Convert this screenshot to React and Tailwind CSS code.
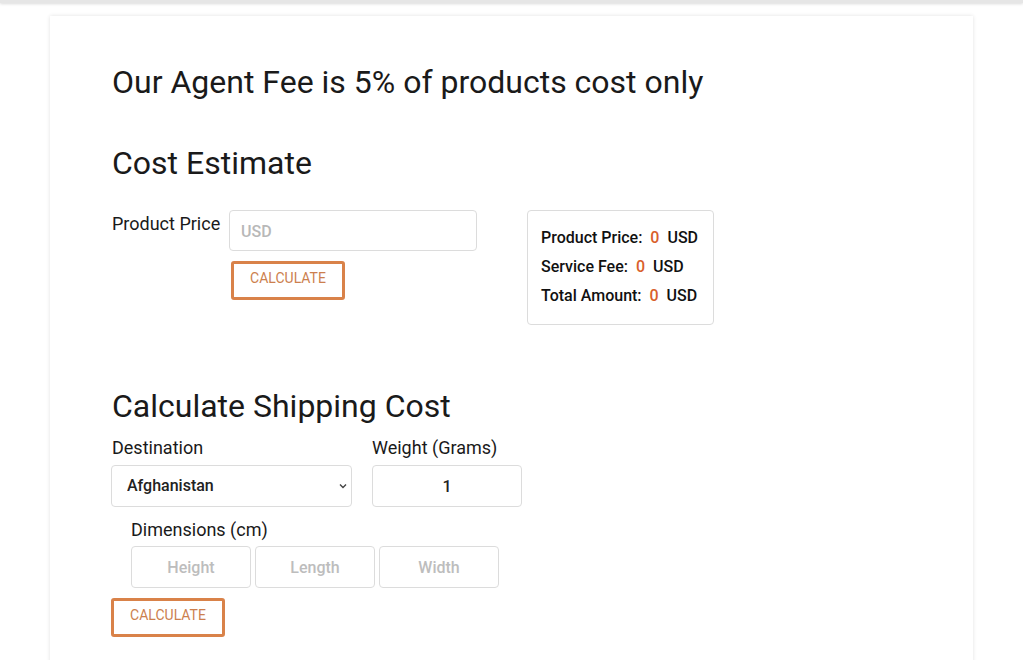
export default function App() {
  const font = { fontFamily: 'Roboto, "Liberation Sans", sans-serif' };
  return (
    <div className="w-[1023px] h-[660px] overflow-hidden bg-white relative" style={font}>
      <div className="h-[3px] bg-[#e6e6e6] shadow-[0_1px_3px_rgba(0,0,0,0.15)]"></div>
      <div className="mx-[50px] mt-[13px] h-[700px] bg-white shadow-[0_0_4px_rgba(0,0,0,0.12)] pl-[62px] pt-[48px] text-[#1a1a1a]">
        <h1 className="text-[32px] leading-[36px] font-normal">Our Agent Fee is 5% of products cost only</h1>
        <h2 className="text-[32px] leading-[36px] font-normal mt-[45px]">Cost Estimate</h2>
        <div className="flex mt-[29px]">
          <div className="text-[18px] leading-[24px] pt-[2px] w-[117px]">Product Price</div>
          <div className="flex flex-col w-[248px]">
            <input
              placeholder="USD"
              className="h-[41px] w-[248px] border border-[#dcdcdc] rounded-[4px] px-[11px] pt-[2px] text-[16px] font-medium placeholder:text-[#b8b8b8] outline-none"
            />
            <button className="mt-[10px] ml-[2px] w-[114px] h-[39px] pb-[4px] border-[3px] border-[#d98249] rounded-[3px] text-[#cc7f4e] text-[14px] bg-white">
              CALCULATE
            </button>
          </div>
          <div className="ml-[50px] w-[187px] h-[115px] border border-[#dcdcdc] rounded-[4px] px-[13px] pt-[12px] text-[16px] font-medium text-[#111]">
            <div className="leading-[29px]">Product Price:&nbsp; <span className="text-[#d9602c]">0</span>&nbsp; USD</div>
            <div className="leading-[29px]">Service Fee:&nbsp; <span className="text-[#d9602c]">0</span>&nbsp; USD</div>
            <div className="leading-[29px]">Total Amount:&nbsp; <span className="text-[#d9602c]">0</span>&nbsp; USD</div>
          </div>
        </div>
        <h2 className="text-[32px] leading-[36px] font-normal mt-[63px]">Calculate Shipping Cost</h2>
        <div className="flex mt-[12px] gap-[20px]">
          <div className="flex flex-col w-[241px]">
            <div className="text-[18px] leading-[24px]">Destination</div>
            <div className="relative mt-[5px] -ml-[1px]">
              <select className="appearance-none h-[42px] w-[241px] border border-[#dcdcdc] rounded-[4px] pl-[15px] text-[16px] font-medium text-[#222] bg-white outline-none">
                <option>Afghanistan</option>
              </select>
              <svg className="absolute right-[5px] top-[17px]" width="10" height="8" viewBox="0 0 10 8">
                <path d="M2 2.5 L5 5.5 L8 2.5" stroke="#444" strokeWidth="1.4" fill="none" />
              </svg>
            </div>
          </div>
          <div className="flex flex-col w-[150px] -ml-[1px]">
            <div className="text-[18px] leading-[24px]">Weight (Grams)</div>
            <input
              defaultValue="1"
              className="mt-[5px] h-[42px] w-[150px] border border-[#dcdcdc] rounded-[4px] text-center text-[16px] font-medium text-[#222] outline-none"
            />
          </div>
        </div>
        <div className="ml-[19px] mt-[11px] text-[18px] leading-[24px]">Dimensions (cm)</div>
        <div className="ml-[19px] mt-[4px] flex gap-[4px]">
          {["Height", "Length", "Width"].map((p) => (
            <input
              key={p}
              placeholder={p}
              className="h-[42px] w-[120px] border border-[#dcdcdc] rounded-[4px] text-center text-[16px] font-medium placeholder:text-[#bdbdbd] outline-none"
            />
          ))}
        </div>
        <button className="mt-[10px] -ml-[1px] w-[114px] h-[39px] pb-[4px] border-[3px] border-[#d98249] rounded-[3px] text-[#cc7f4e] text-[14px] bg-white">
          CALCULATE
        </button>
      </div>
    </div>
  );
}
